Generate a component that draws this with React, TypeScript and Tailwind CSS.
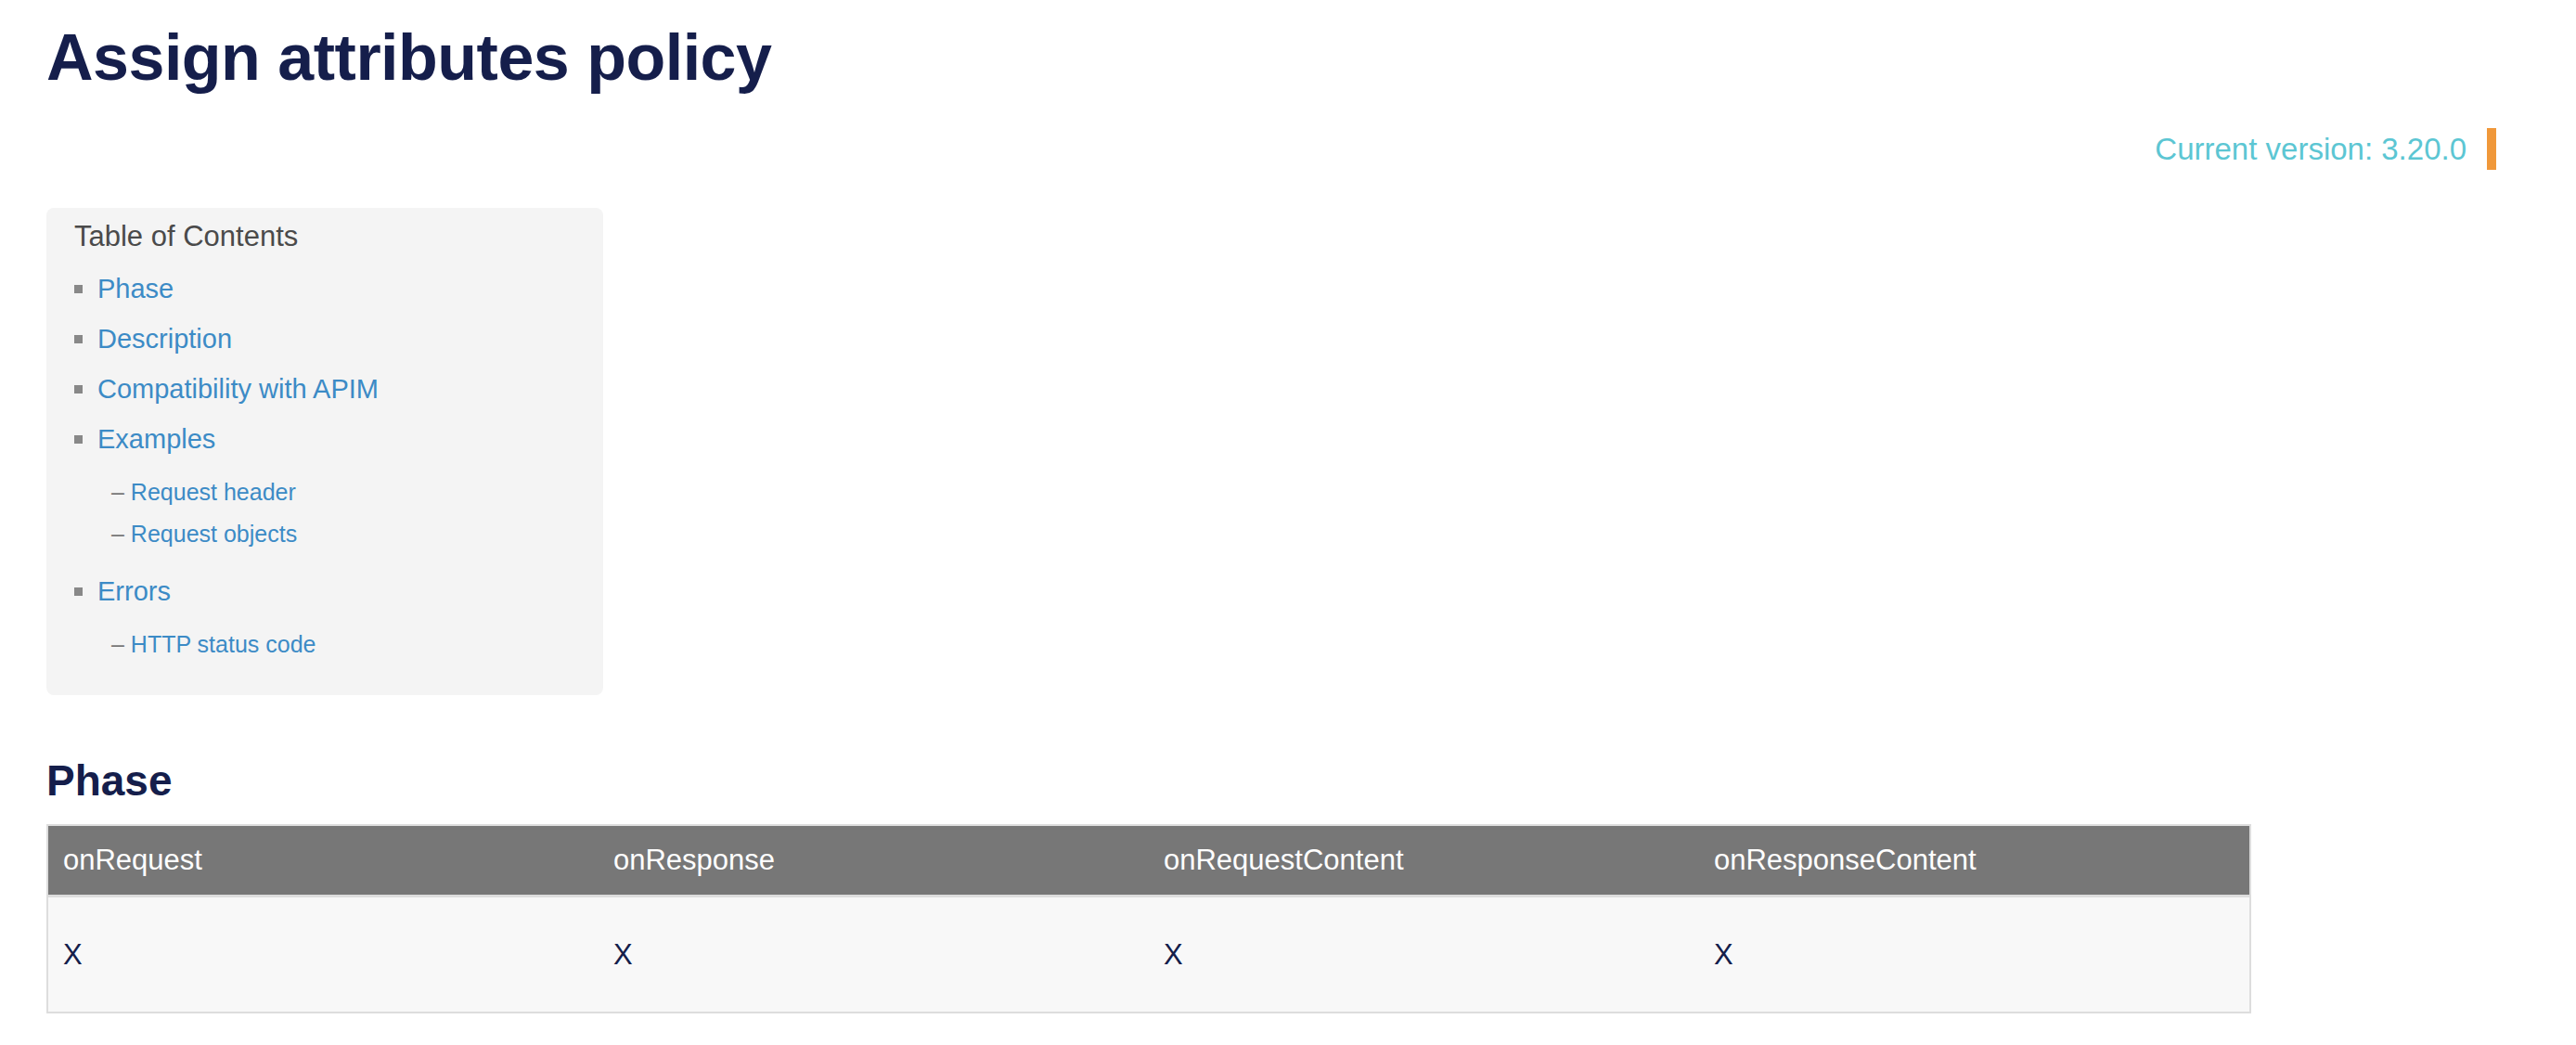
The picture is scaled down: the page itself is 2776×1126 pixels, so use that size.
import React from "react"

type TocItem = { label: string; children?: string[] }

const toc: TocItem[] = [
    { label: "Phase" },
    { label: "Description" },
    { label: "Compatibility with APIM" },
    { label: "Examples", children: ["Request header", "Request objects"] },
    { label: "Errors", children: ["HTTP status code"] },
]

const phases = ["onRequest", "onResponse", "onRequestContent", "onResponseContent"]

export default function App() {
    return (
        <div className="min-h-screen bg-white px-[50px] pt-[22px] font-['Liberation_Sans',Arial,sans-serif]">
            {/* page title */}
            <h1 className="text-[70px] leading-[80px] font-bold tracking-[-0.5px] text-[#151e4b]">
                Assign attributes policy
            </h1>

            {/* version badge */}
            <div className="mt-[36px] flex justify-end pr-[36px]">
                <span className="border-r-[10px] border-[#f0983a] pr-[22px] text-[33px] leading-[45px] text-[#5cc6d3]">
                    Current version: 3.20.0
                </span>
            </div>

            {/* table of contents */}
            <div className="mt-[41px] w-[600px] rounded-lg bg-[#f4f4f4] pl-[30px] pt-[11px] pb-[20px]">
                <div className="text-[31px] leading-[40px] text-[#4a4a4a]">Table of Contents</div>
                <ul className="mt-[9px]">
                    {toc.map((item) => (
                        <li key={item.label}>
                            <div className="flex h-[54px] items-center">
                                <span className="mr-[16px] h-[9px] w-[9px] shrink-0 bg-[#888888]" />
                                <a href="#" className="text-[29px] leading-[54px] text-[#3c8bc6]">
                                    {item.label}
                                </a>
                            </div>
                            {item.children && (
                                <ul className="mt-[8px] mb-[12px] pl-[40px]">
                                    {item.children.map((child) => (
                                        <li key={child} className="text-[25px] leading-[45px]">
                                            <span className="text-[#777777]">– </span>
                                            <a href="#" className="text-[#3c8bc6]">{child}</a>
                                        </li>
                                    ))}
                                </ul>
                            )}
                        </li>
                    ))}
                </ul>
            </div>

            {/* phase section */}
            <h2 className="mt-[64px] text-[46px] leading-[56px] font-bold text-[#151e4b]">Phase</h2>
            <div className="mt-[19px] w-[2376px] border-2 border-[#dddddd]">
                <table className="w-full table-fixed border-separate border-spacing-0">
                    <thead>
                        <tr className="bg-[#777777]">
                            {phases.map((p) => (
                                <th
                                    key={p}
                                    className="border-b-[3px] border-[#dddddd] px-[16px] text-left text-[31px] leading-[74px] font-normal text-white"
                                >
                                    {p}
                                </th>
                            ))}
                        </tr>
                    </thead>
                    <tbody>
                        <tr className="bg-[#f8f8f8]">
                            {phases.map((p) => (
                                <td key={p} className="px-[16px] py-[44px] text-[31px] leading-[35px] text-[#151e4b]">
                                    X
                                </td>
                            ))}
                        </tr>
                    </tbody>
                </table>
            </div>
        </div>
    )
}
